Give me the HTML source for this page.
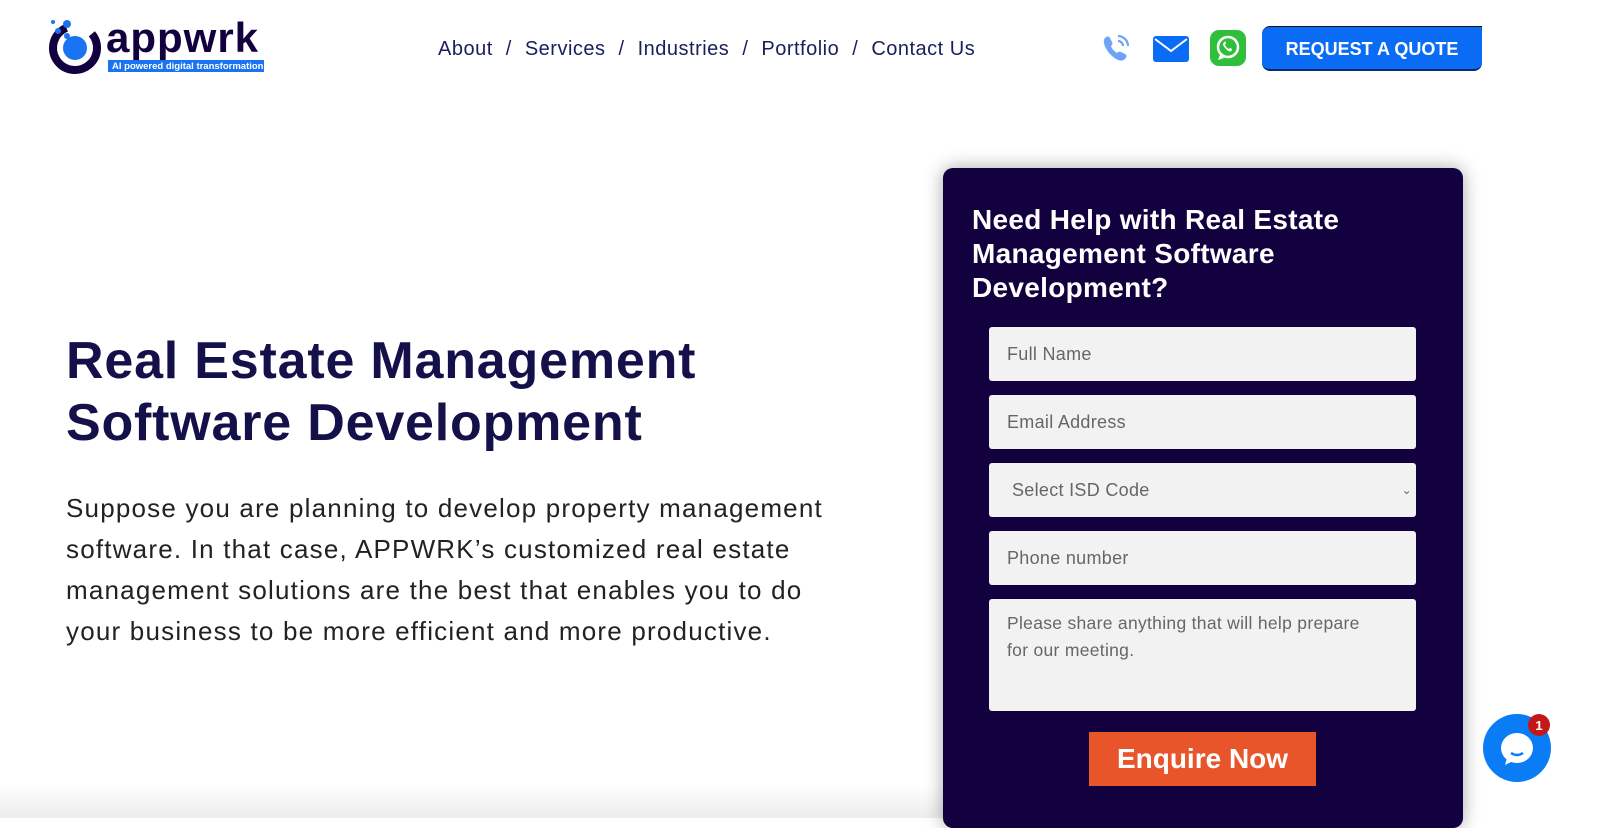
<!DOCTYPE html>
<html><head><meta charset="utf-8"><style>
*{margin:0;padding:0;box-sizing:border-box}
body{width:1600px;height:818px;overflow:hidden;background:#fff;font-family:"Liberation Sans",Arial,sans-serif;position:relative}
.nav{position:absolute;top:38px;left:438px;font-size:20px;letter-spacing:.5px;color:#1a1f5c;white-space:nowrap}
.nav span{margin:0 13px}
.btn{position:absolute;left:1262px;top:26px;width:220px;height:45px;background:#0a6cf5;border-radius:8px 0 8px 8px;color:#fff;font-size:18px;font-weight:bold;text-align:center;line-height:45px;border-top:1px solid #111;border-bottom:2px solid #0a2a6a}
h1{position:absolute;left:66px;top:330px;font-size:52px;letter-spacing:.8px;line-height:62px;color:#14104a;font-weight:bold;white-space:nowrap}
p.desc{position:absolute;left:66px;top:488px;font-size:26px;letter-spacing:1.2px;line-height:41px;color:#222;width:800px}
.panel{position:absolute;left:943px;top:168px;width:520px;height:660px;background:#12003f;border-radius:10px;box-shadow:0 0 18px rgba(0,0,0,.35)}
.panel h2{position:absolute;left:29px;top:35px;color:#fff;font-size:28px;letter-spacing:.3px;line-height:34px;font-weight:bold;width:440px}
.in{position:absolute;left:46px;width:427px;height:54px;background:#f2f2f2;border-radius:3px;color:#666;font-size:18px;letter-spacing:.3px;padding:0 18px;line-height:54px}
.enq{position:absolute;left:146px;top:564px;width:227px;height:54px;background:#e9552a;color:#fff;font-weight:bold;font-size:28px;text-align:center;line-height:54px}
.fade{position:absolute;left:0;top:785px;width:943px;height:33px;background:linear-gradient(#fff,#ececec)}
</style></head><body>
<svg style="position:absolute;left:46px;top:14px" width="225" height="62">
<circle cx="29" cy="34" r="22" fill="none" stroke="#12003f" stroke-width="8" stroke-dasharray="110 30" transform="rotate(-40 29 34)"/>
<circle cx="29" cy="34" r="12" fill="#1a73f0"/>
<circle cx="21" cy="10" r="4" fill="#1a73f0"/><circle cx="12" cy="17" r="3" fill="#1a73f0"/><circle cx="21" cy="22" r="3" fill="#1a73f0"/><circle cx="7" cy="8" r="2" fill="#1a73f0"/>
<text x="60" y="38" font-family="Liberation Sans" font-weight="bold" font-size="42" letter-spacing="1" fill="#12003f">appwrk</text>
<rect x="62" y="46" width="156" height="12" fill="#1a73f0"/>
<text x="66" y="55" font-family="Liberation Sans" font-weight="bold" font-size="9.5" fill="#fff">AI powered digital transformation</text>
</svg>
<div class="nav">About<span>/</span>Services<span>/</span>Industries<span>/</span>Portfolio<span>/</span>Contact Us</div>
<svg style="position:absolute;left:1100px;top:32px" width="32" height="32" viewBox="0 0 32 32"><path d="M5 6c2-2 4-2 5 0l2 4c1 2 0 3-1 4 1 3 3 5 6 7 1-1 2-2 4-1l4 2c2 1 2 3 0 5-3 3-8 2-14-4S2 9 5 6z" fill="#6ea4f7"/><path d="M18 4a10 10 0 0 1 10 10M18 9a5 5 0 0 1 5 5" stroke="#6ea4f7" stroke-width="2.2" fill="none"/></svg>
<svg style="position:absolute;left:1153px;top:36px" width="36" height="26"><rect width="36" height="26" rx="3" fill="#0a6cf5"/><path d="M2 3l16 12L34 3" stroke="#fff" stroke-width="2" fill="none"/></svg>
<svg style="position:absolute;left:1210px;top:30px" width="36" height="36"><rect width="36" height="36" rx="9" fill="#2fbf3a"/><circle cx="18" cy="17" r="10" fill="none" stroke="#fff" stroke-width="2.5"/><path d="M10 25l-2 5 6-2z" fill="#fff"/><path d="M14 12c1-1 2 0 2 1l-1 2c1 2 2 3 4 4l1-1c1 0 2 1 2 2-1 2-3 2-5 0s-4-4-4-6z" fill="#fff"/></svg>
<div class="btn">REQUEST A QUOTE</div>
<h1>Real Estate Management<br>Software Development</h1>
<p class="desc">Suppose you are planning to develop property management software. In that case, APPWRK’s customized real estate management solutions are the best that enables you to do your business to be more efficient and more productive.</p>
<div class="fade"></div>
<div class="panel">
<h2>Need Help with Real Estate Management Software Development?</h2>
<div class="in" style="top:159px">Full Name</div>
<div class="in" style="top:227px">Email Address</div>
<div class="in" style="top:295px;padding-left:23px">Select ISD Code<span style="position:absolute;right:4px;font-size:12px">⌄</span></div>
<div class="in" style="top:363px">Phone number</div>
<div class="in" style="top:431px;height:112px;line-height:27px;padding-top:11px;padding-right:40px;font-size:17.5px">Please share anything that will help prepare for our meeting.</div>
<div class="enq">Enquire Now</div>
</div>
<svg style="position:absolute;left:1480px;top:710px" width="80" height="75"><circle cx="37" cy="38" r="34" fill="#0a7cf5"/><ellipse cx="37" cy="38" rx="16" ry="15" fill="#fff"/><path d="M27 48l-2 7 8-4z" fill="#fff"/><path d="M31 43q6 4 12 0" stroke="#0a7cf5" stroke-width="2.5" fill="none"/><circle cx="59" cy="15" r="11" fill="#c41818"/><text x="59" y="20" text-anchor="middle" font-family="Liberation Sans" font-weight="bold" font-size="13" fill="#fff">1</text></svg>
</body></html>
